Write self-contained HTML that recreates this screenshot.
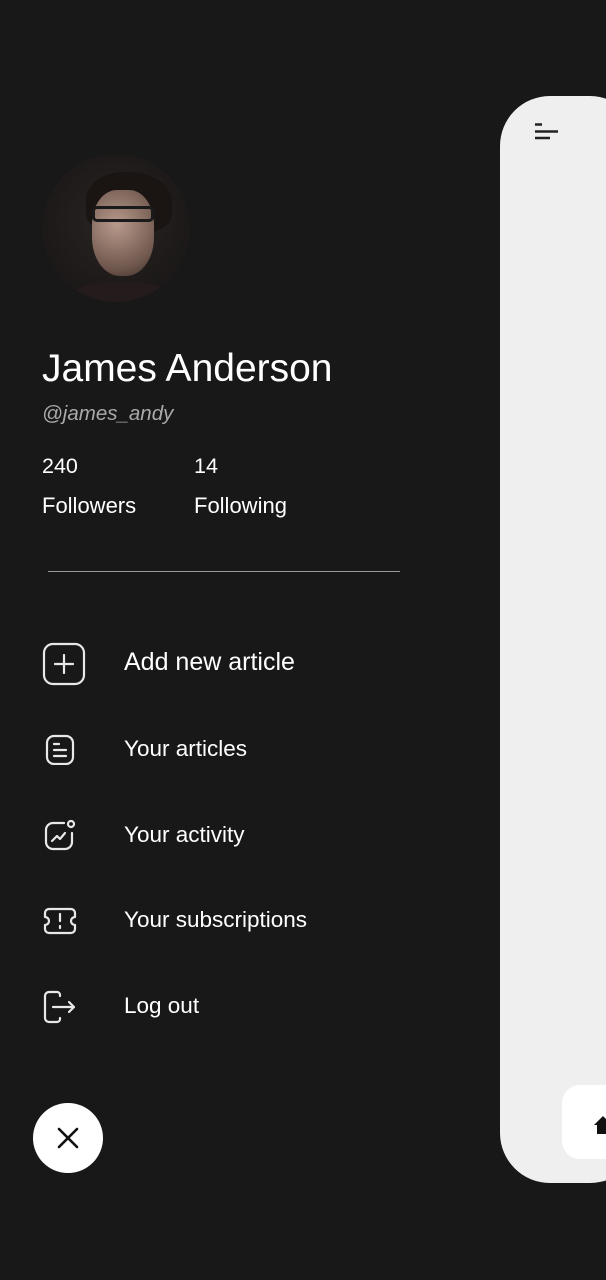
<!DOCTYPE html>
<html><head><meta charset="utf-8"><style>
*{margin:0;padding:0;box-sizing:border-box}
body{width:606px;height:1280px;background:#181818;overflow:hidden;position:relative;font-family:"Liberation Sans",Roboto,sans-serif;color:#fff}
.panel{position:absolute;left:500px;top:96px;width:140px;height:1087px;background:#efefef;border-radius:50px}
.avatar{position:absolute;left:42px;top:154px;width:148px;height:148px;border-radius:50%;background:radial-gradient(circle at 50% 45%,#2a2523 0%,#1d1a19 60%,#161414 100%);overflow:hidden}
.t{position:absolute;white-space:nowrap}
.item{position:absolute;left:124px;font-size:22.5px}
svg.i{position:absolute;fill:none;stroke:#e8e8e8;stroke-width:2.2;stroke-linecap:round;stroke-linejoin:round}
</style></head><body>
<div class="panel"></div>
<svg style="position:absolute;left:534px;top:122px" width="24" height="18"><path d="M1 2.5h7M1 9.5h23M1 16h15" stroke="#222" stroke-width="2.4"/></svg>
<div style="position:absolute;left:562px;top:1085px;width:60px;height:74px;background:#fff;border-radius:18px"></div>
<svg style="position:absolute;left:594px;top:1116px" width="12" height="18"><path d="M0 9L9 0L18 9H15V18H3V9Z" fill="#111"/></svg>

<div class="avatar">
 <div style="position:absolute;left:44px;top:18px;width:86px;height:60px;border-radius:45% 50% 30% 30%;background:#1a1413"></div>
 <div style="position:absolute;left:50px;top:36px;width:62px;height:86px;border-radius:40% 40% 45% 45%;background:radial-gradient(circle at 40% 40%,#b89a8c,#6e564c 70%,#3a2d28)"></div>
 <div style="position:absolute;left:50px;top:52px;width:62px;height:16px;border:3px solid #1a1a1a;border-radius:5px"></div>
 <div style="position:absolute;left:30px;top:128px;width:100px;height:40px;border-radius:40% 40% 0 0;background:#241c1c"></div>
</div>

<div class="t" style="left:42px;top:347px;font-size:39px">James Anderson</div>
<div class="t" style="left:42px;top:402px;font-size:20.5px;font-style:italic;color:#aaa">@james_andy</div>
<div class="t" style="left:42px;top:454px;font-size:21.5px">240</div>
<div class="t" style="left:42px;top:493px;font-size:22px">Followers</div>
<div class="t" style="left:194px;top:454px;font-size:21.5px">14</div>
<div class="t" style="left:194px;top:493px;font-size:22px">Following</div>
<div style="position:absolute;left:48px;top:571px;width:352px;height:1px;background:#9a9a9a"></div>

<svg class="i" style="left:42px;top:642px" width="44" height="44"><rect x="2" y="2" width="40" height="40" rx="9"/><path d="M22 13v18M13 22h18"/></svg>
<div class="item" style="top:648px;font-size:25px">Add new article</div>

<svg class="i" style="left:44px;top:733px" width="32" height="32"><rect x="3" y="3" width="26" height="28" rx="7"/><path d="M10 11h5M10 17h12M10 23h12"/></svg>
<div class="item" style="top:736px">Your articles</div>

<svg class="i" style="left:42px;top:818px" width="36" height="36"><path d="M22 5H11a7 7 0 0 0-7 7v12a7 7 0 0 0 7 7h12a7 7 0 0 0 7-7V15"/><circle cx="29" cy="6" r="3"/><path d="M10 23l5-5 3 3 5-6"/></svg>
<div class="item" style="top:822px">Your activity</div>

<svg class="i" style="left:42px;top:906px" width="36" height="30"><path d="M7 3h22a4 4 0 0 1 4 4v4a4 4 0 0 0 0 8v4a4 4 0 0 1-4 4H7a4 4 0 0 1-4-4v-4a4 4 0 0 0 0-8V7a4 4 0 0 1 4-4z"/><path d="M18 8v7M18 20v2"/></svg>
<div class="item" style="top:907px">Your subscriptions</div>

<svg class="i" style="left:42px;top:990px" width="36" height="34"><path d="M18 6V5a3 3 0 0 0-3-3H7a4 4 0 0 0-4 4v22a4 4 0 0 0 4 4h8a3 3 0 0 0 3-3v-1"/><path d="M11 17h21M27 12l5 5-5 5"/></svg>
<div class="item" style="top:993px">Log out</div>

<div style="position:absolute;left:33px;top:1103px;width:70px;height:70px;border-radius:50%;background:#fff"></div>
<svg style="position:absolute;left:57px;top:1127px" width="22" height="22"><path d="M2 2L20 20M20 2L2 20" stroke="#111" stroke-width="2.6" stroke-linecap="round"/></svg>
</body></html>
